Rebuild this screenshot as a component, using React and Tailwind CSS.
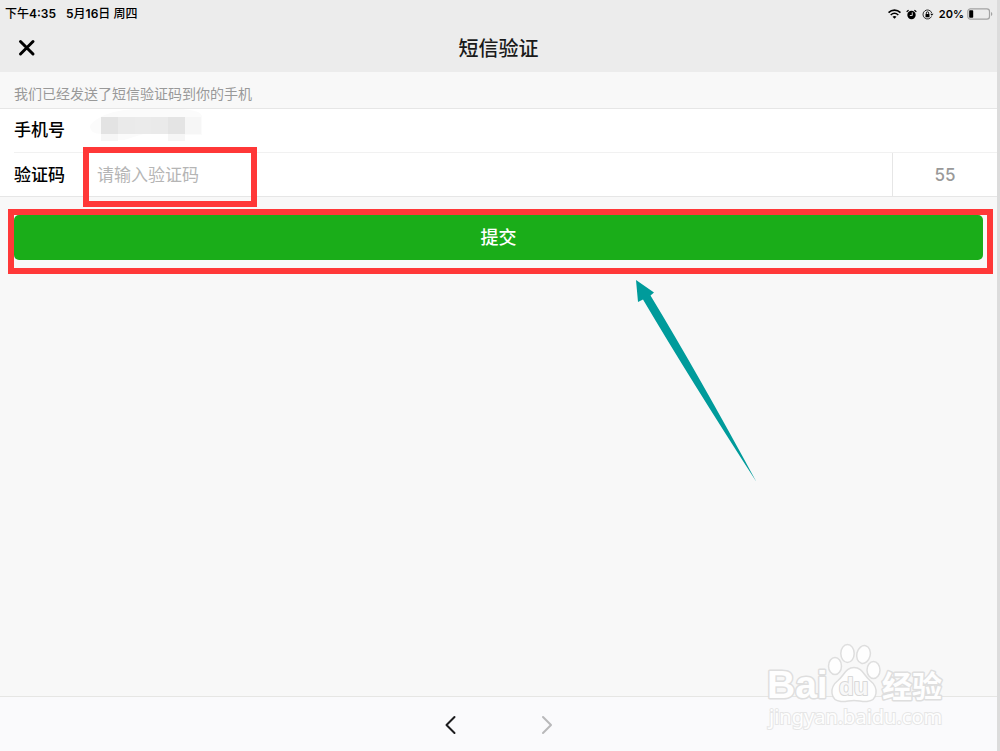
import React from 'react';

function WifiIcon() {
  return (
    <svg viewBox="0 0 26 20" className="w-[13px] h-[10px]" fill="none" stroke="#000" aria-hidden="true">
      <path d="M1 7.2C8 .6 18 .6 25 7.2" strokeWidth="3.4" />
      <path d="M5.4 12C10 7.8 16 7.8 20.6 12" strokeWidth="3.2" />
      <path d="M13 19.5l-4-4.2c2.3-2 5.7-2 8 0z" fill="#000" stroke="none" />
    </svg>
  );
}

function AlarmIcon() {
  return (
    <svg viewBox="0 0 22 22" className="w-[11px] h-[11px]" fill="none" aria-hidden="true">
      <circle cx="11" cy="12" r="8.4" fill="#000" />
      <path d="M2 5L4.500 3M20 5L17.500 3" stroke="#000" strokeWidth="2.4" strokeLinecap="round" />
      <path d="M12.5 7.5V13H8.500" stroke="#ececec" strokeWidth="1.8" strokeLinecap="round" strokeLinejoin="round" />
    </svg>
  );
}

function RotationLockIcon() {
  return (
    <svg viewBox="0 0 24 22" className="w-3 h-[11px]" fill="none" stroke="#000" aria-hidden="true">
      <path d="M19.5 8A9 9 0 1 0 19 15" strokeWidth="1.6" />
      <path d="M16.5 9.5h6.5L19.7 13.5z" fill="#000" stroke="none" />
      <rect x="7" y="9.8" width="8" height="6.5" rx="1" fill="#000" stroke="none" />
      <path d="M8.6 10V8a2.4 2.4 0 0 1 4.8 0v2" strokeWidth="1.7" />
    </svg>
  );
}

function BatteryIcon() {
  return (
    <svg viewBox="0 0 26 12" className="w-[26px] h-3" fill="none" aria-hidden="true">
      <rect x=".8" y=".8" width="21.7" height="10.4" rx="2.6" stroke="#a3a3a3" strokeWidth="1.2" />
      <rect x="2.2" y="2.2" width="4" height="7.6" rx=".8" fill="#000" />
      <path d="M24 4v4c1.8-.6 1.8-3.4 0-4z" fill="#a3a3a3" />
    </svg>
  );
}

function StatusBar() {
  return (
    <div className="h-7 pl-[5px] pr-1 flex items-center justify-between leading-4 text-black">
      <div className="flex gap-[10px] text-[12px] font-medium">
        <span>
          下午<span className="font-semibold">4:35</span>
        </span>
        <span>
          <span className="font-semibold">5</span>月<span className="font-semibold">16</span>日 周四
        </span>
      </div>
      <div className="flex items-center gap-[5px] text-[11px] font-semibold">
        <WifiIcon />
        <AlarmIcon />
        <RotationLockIcon />
        <div className="flex items-center gap-[3px]">
          <span>20%</span>
          <BatteryIcon />
        </div>
      </div>
    </div>
  );
}

function TitleBar() {
  return (
    <div className="h-11 px-[18px] pb-1 grid grid-cols-[18px_1fr_18px] items-center">
      <button type="button" aria-label="关闭" className="w-[18px] h-[18px]">
        <svg viewBox="0 0 18 18" className="w-[18px] h-[18px]" stroke="#000" strokeWidth="3" strokeLinecap="round">
          <path d="M2.5 2.5L15 15M15 2.5L2.5 15" />
        </svg>
      </button>
      <h1 className="pt-0.5 text-center text-[20px] leading-7 font-medium text-[#1a1a1a]">短信验证</h1>
    </div>
  );
}

// Hidden phone number, pixelated
function MaskedNumber() {
  return (
    <svg viewBox="0 0 112 34" className="w-[112px] h-[34px]" role="img" aria-label="手机号已隐藏">
      <path d="M0 17C8 6 26 0 52 0h40c12 1 20 3 20 8v18H86l-26-3-26 8H12V25C4 25 0 22 0 17z" fill="#fbfbfb" />
      <path d="M11 8h17v17H11z" fill="#e3e3e3" />
      <path d="M28 8h17v17H28z" fill="#eaeaea" />
      <path d="M45 8h16v17H45z" fill="#ebebeb" />
      <path d="M61 8h17v17H61z" fill="#eaeaea" />
      <path d="M78 8h17v17H78z" fill="#e4e4e4" />
      <path d="M95 8h16v17H95zM11 25h17v7H11zM78 25h17v7H78z" fill="#f6f6f6" />
    </svg>
  );
}

function Arrow() {
  return (
    <svg viewBox="0 0 122 204" className="absolute top-full left-[63.9%] mt-3 w-[122px] h-[204px] pointer-events-none" aria-hidden="true">
      <path d="M0 0L18 12.5L14.5 15.5Q62 94 120.5 202Q54 99 7 19.500L2 22z" fill="#009b9b" />
    </svg>
  );
}

function Watermark() {
  return (
    <svg viewBox="0 0 186 98" className="absolute right-[47px] bottom-[12px] w-[186px] h-[98px] pointer-events-none" aria-label="Baidu经验">
      <g fill="#fefefe" stroke="#dedede" strokeWidth="1.5">
        <ellipse cx="71" cy="25" rx="6.5" ry="8.5" />
        <ellipse cx="83.5" cy="12.5" rx="6.7" ry="9" />
        <ellipse cx="99.5" cy="13.5" rx="6.7" ry="9" transform="rotate(14 99.5 13.5)" />
        <ellipse cx="109.5" cy="29" rx="6.5" ry="8.5" />
        <path d="M90 26.5c8 0 10 8 16 13 9 7 8 20-3 21-5 .5-8-1-13-1s-8 1.5-13 1c-11-1-12-14-3-21 6-5 8-13 16-13z" />
      </g>
      <g fontFamily="'Liberation Sans', 'Noto Sans CJK SC', sans-serif" fontWeight="700" paintOrder="stroke" strokeLinejoin="round">
        <text x="3" y="57" fontSize="39" fill="#fefefe" stroke="#dedede" strokeWidth="3">Bai</text>
        <text x="75" y="54" fontSize="24" fill="#f8f8f8" stroke="#d8d8d8" strokeWidth="2">du</text>
        <text x="118" y="56" fontSize="30" fill="#fefefe" stroke="#dedede" strokeWidth="3">经验</text>
      </g>
      <text x="5" y="83" fontFamily="'Noto Sans', sans-serif" fontSize="20" fill="#fefefe" stroke="#e6e6e6" strokeWidth="2" paintOrder="stroke">
        jingyan.baidu.com
      </text>
    </svg>
  );
}

function VerifyForm() {
  return (
    <form onSubmit={(e) => e.preventDefault()}>
      <div className="bg-white border-y border-[#e6e6e6]">
        <div className="h-[43px] pl-[14px] flex items-start">
          <span className="w-[76px] pt-[9px] text-[17px] leading-6 font-medium text-black">手机号</span>
          <MaskedNumber />
        </div>
        <div className="ml-[14px] h-11 flex items-stretch border-t border-[#f1f1f1]">
          <label htmlFor="code" className="w-[69px] self-center text-[17px] leading-6 font-medium text-black">
            验证码
          </label>
          <div className="relative flex-1 flex">
            <input
              id="code"
              type="text"
              inputMode="numeric"
              placeholder="请输入验证码"
              className="w-full pl-[14px] text-[17px] leading-6 bg-transparent outline-none placeholder:text-[#b5b5b5]"
            />
            {/* Highlight around the code field */}
            <div className="absolute left-0 -top-[6px] w-[174px] h-[60px] border-6 border-[#ff3838] pointer-events-none" />
          </div>
          <div className="w-[105px] border-l border-[#e6e6e6] flex items-center justify-center text-[17px] leading-6 font-medium text-[#999]">
            55
          </div>
        </div>
      </div>

      {/* Highlight around the submit button */}
      <div className="relative mt-3 ml-2 mr-1 border-6 border-[#ff3838] pr-1 pb-2">
        <button type="submit" className="block w-full h-[45px] rounded-[5px] bg-[#1aad19] text-[18px] leading-6 font-medium text-white">
          提交
        </button>
        <Arrow />
      </div>
    </form>
  );
}

function BottomNav() {
  return (
    <nav className="h-[55px] pt-px border-t border-[#e6e6e4] bg-[#fafafc] flex items-center justify-center gap-[76px]">
      <button type="button" aria-label="后退" className="w-5 h-5">
        <svg viewBox="0 0 20 20" className="w-5 h-5" fill="none" stroke="#1c1c1e" strokeWidth="2" strokeLinecap="round" strokeLinejoin="round">
          <path d="M13.5 2L5.5 10l8 8" />
        </svg>
      </button>
      <button type="button" aria-label="前进" className="w-5 h-5">
        <svg viewBox="0 0 20 20" className="w-5 h-5" fill="none" stroke="#b8b8ba" strokeWidth="2" strokeLinecap="round" strokeLinejoin="round">
          <path d="M6 2l8 8-8 8" />
        </svg>
      </button>
    </nav>
  );
}

export default function App() {
  return (
    <div className="relative min-h-screen flex flex-col bg-[#f8f8f8] border-r-3 border-[#dcdcdc] font-[Inter,'Noto_Sans_CJK_SC',sans-serif]">
      <header className="bg-[#ececec]">
        <StatusBar />
        <TitleBar />
      </header>
      <main className="flex-1">
        <p className="h-9 pl-[14px] pt-3 text-[14px] leading-5 text-[#999]">我们已经发送了短信验证码到你的手机</p>
        <VerifyForm />
      </main>
      <BottomNav />
      <Watermark />
    </div>
  );
}
